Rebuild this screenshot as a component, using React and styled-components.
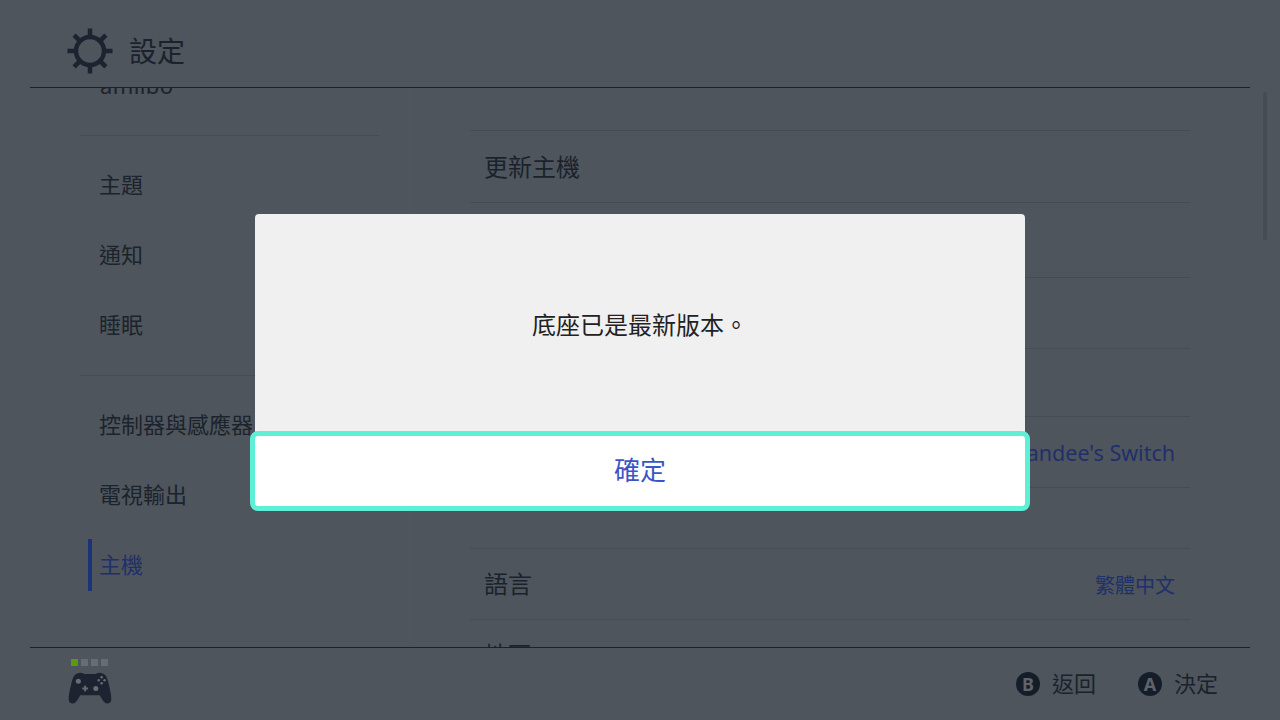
import React from 'react';
import styled, { createGlobalStyle } from 'styled-components';

const Global = createGlobalStyle`
  html, body { margin: 0; padding: 0; background: #4e555c; }
  * { box-sizing: border-box; }
`

const Screen = styled.div`
  position: relative;
  width: 1280px;
  height: 720px;
  overflow: hidden;
  display: flex;
  flex-direction: column;
  background: #4e555c;
  color: #1b222c;
  font-family: "Noto Sans", "Noto Sans CJK TC", sans-serif;
`

const Header = styled.header`
  flex: none;
  height: 88px;
  margin: 0 30px;
  padding: 14px 0 0 36px;
  display: flex;
  align-items: center;
  gap: 15px;
  background: #4e555c;
  border-bottom: 1px solid #1a222c;
  position: relative;
  z-index: 1;
`

const Title = styled.h1`
  margin: 0;
  font-size: 28px;
  font-weight: 400;
  line-height: 36px;
`

const Body = styled.main`
  flex: none;
  height: 559px;
  display: flex;
  overflow: hidden;
`

const Sidebar = styled.nav`
  flex: none;
  width: 330px;
  margin-left: 80px;
  padding-right: 30px;
  margin-top: -38px;
  border-right: 1px solid #50575e;
`

const MenuItem = styled.div`
  position: relative;
  height: 70px;
  padding: 0 0 ${p => (p.$latin ? 1 : 4)}px ${p => (p.$latin ? 20 : 19)}px;
  display: flex;
  align-items: center;
  font-size: 22px;
  letter-spacing: ${p => (p.$latin ? '0.4px' : '0')};
  color: ${p => (p.$active ? '#20306a' : '#1c232c')};
  white-space: nowrap;
  &::before {
    content: '';
    display: ${p => (p.$active ? 'block' : 'none')};
    position: absolute;
    left: 8px;
    top: 9px;
    bottom: 9px;
    width: 4px;
    background: #1d3378;
  }
`

const MenuDivider = styled.div`
  height: 1px;
  margin: 15px 0 14px;
  background: #454c53;
`

const Content = styled.section`
  flex: none;
  width: 720px;
  margin-left: 60px;
  padding-top: 42px;
`

const Row = styled.div`
  height: ${p => p.$h}px;
  padding: 0 15px 3px 14px;
  display: flex;
  align-items: center;
  justify-content: space-between;
  border-top: 1px solid #454c53;
  font-size: 24px;
  white-space: nowrap;
`

const Value = styled.span`
  margin-top: 3px;
  font-size: ${p => p.$size || 20}px;
  color: #20306a;
`

const Scrollbar = styled.div`
  flex: none;
  width: 4px;
  height: 148px;
  margin: 4px 0 0 73px;
  border-radius: 2px;
  background: #454c54;
`

const Footer = styled.footer`
  flex: none;
  height: 73px;
  margin: 0 30px;
  padding: 0 32px 0 37px;
  display: flex;
  align-items: center;
  justify-content: space-between;
  background: #4e555c;
  border-top: 1px solid #1a222c;
  position: relative;
  z-index: 1;
`

const Controller = styled.div`
  display: flex;
  flex-direction: column;
  gap: 6px;
  margin-bottom: 6px;
`

const Lamps = styled.div`
  display: flex;
  gap: 3px;
  padding-left: 4px;
`

const Lamp = styled.span`
  width: 7px;
  height: 7px;
  background: ${p => (p.$on ? '#5a9a10' : '#676d73')};
`

const Hints = styled.div`
  display: flex;
  align-items: center;
  gap: 42px;
`

const Hint = styled.div`
  display: flex;
  align-items: center;
  gap: 12px;
  font-size: 22px;
`

const HintLabel = styled.span`
  padding-bottom: 4px;
`

const KeyBadge = styled.span`
  width: 24px;
  height: 24px;
  border-radius: 50%;
  background: #151d28;
  color: #5d646c;
  display: flex;
  align-items: center;
  justify-content: center;
  font-size: 18px;
  font-weight: 700;
  line-height: 1;
`

const Dialog = styled.div`
  position: absolute;
  left: 255px;
  top: 214px;
  width: 770px;
  z-index: 2;
`

const Message = styled.div`
  height: 222px;
  padding-bottom: 4px;
  display: flex;
  align-items: center;
  justify-content: center;
  background: #f0f0f0;
  border-radius: 4px 4px 0 0;
  font-size: 24px;
  color: #222;
`

const ConfirmButton = styled.button`
  display: flex;
  align-items: center;
  justify-content: center;
  width: 780px;
  height: 80px;
  margin: -5px 0 0 -5px;
  padding: 0 0 4px;
  position: relative;
  background: #fff;
  border: 5px solid #5ef0d6;
  border-radius: 8px;
  color: #3a55c6;
  font-family: inherit;
  font-size: 26px;
`

const GearIcon = () => (
  <svg width="48" height="48" viewBox="0 0 48 48" fill="none" stroke="#1b2430">
    <circle cx="24" cy="24" r="14" strokeWidth="4.5" />
    {[0, 45, 90, 135, 180, 225, 270, 315].map(a => (
      <line key={a} x1="24" y1="10" x2="24" y2="1.5" strokeWidth="4.5" transform={`rotate(${a} 24 24)`} />
    ))}
  </svg>
)

const PadIcon = () => (
  <svg width="46" height="32" viewBox="0 0 46 33">
    <path
      d="M10 1.5 C12 0.5 15 0.5 17 2 H29 C31 0.5 34 0.5 36 1.5 C39 2.5 40.5 5 41.5 9 C43 15 45 23 45 28 C45 31 43 32.5 41 32.5 C38.5 32.5 37 30.5 35.5 28 L33 24 H13 L10.5 28 C9 30.5 7.5 32.5 5 32.5 C3 32.5 1 31 1 28 C1 23 3 15 4.5 9 C5.5 5 7 2.5 10 1.5 Z"
      fill="#1b2430"
    />
    <g fill="#676d73">
      <circle cx="11" cy="9.5" r="2.6" />
      <circle cx="29" cy="17" r="2.6" />
      <rect x="15" y="16" width="6" height="2" />
      <rect x="17" y="14" width="2" height="6" />
      <circle cx="35" cy="5.5" r="1.3" />
      <circle cx="35" cy="11.5" r="1.3" />
      <circle cx="32" cy="8.5" r="1.3" />
      <circle cx="38" cy="8.5" r="1.3" />
    </g>
  </svg>
)

export default function App() {
  return (
    <Screen>
      <Global />
      <Header>
        <GearIcon />
        <Title>設定</Title>
      </Header>
      <Body>
        <Sidebar>
          <MenuItem $latin>amiibo</MenuItem>
          <MenuDivider />
          <MenuItem>主題</MenuItem>
          <MenuItem>通知</MenuItem>
          <MenuItem>睡眠</MenuItem>
          <MenuDivider />
          <MenuItem>控制器與感應器</MenuItem>
          <MenuItem>電視輸出</MenuItem>
          <MenuItem $active>主機</MenuItem>
        </Sidebar>
        <Content>
          <Row $h={72}>更新主機</Row>
          <Row $h={75} />
          <Row $h={71} />
          <Row $h={68} />
          <Row $h={71}>
            <span />
            <Value $size={21.5}>andee's Switch</Value>
          </Row>
          <Row $h={61} />
          <Row $h={71}>
            語言
            <Value>繁體中文</Value>
          </Row>
          <Row $h={71}>地區</Row>
        </Content>
        <Scrollbar />
      </Body>
      <Footer>
        <Controller>
          <Lamps>
            <Lamp $on />
            <Lamp />
            <Lamp />
            <Lamp />
          </Lamps>
          <PadIcon />
        </Controller>
        <Hints>
          <Hint><KeyBadge>B</KeyBadge><HintLabel>返回</HintLabel></Hint>
          <Hint><KeyBadge>A</KeyBadge><HintLabel>決定</HintLabel></Hint>
        </Hints>
      </Footer>
      <Dialog>
        <Message>底座已是最新版本。</Message>
        <ConfirmButton>確定</ConfirmButton>
      </Dialog>
    </Screen>
  );
}
